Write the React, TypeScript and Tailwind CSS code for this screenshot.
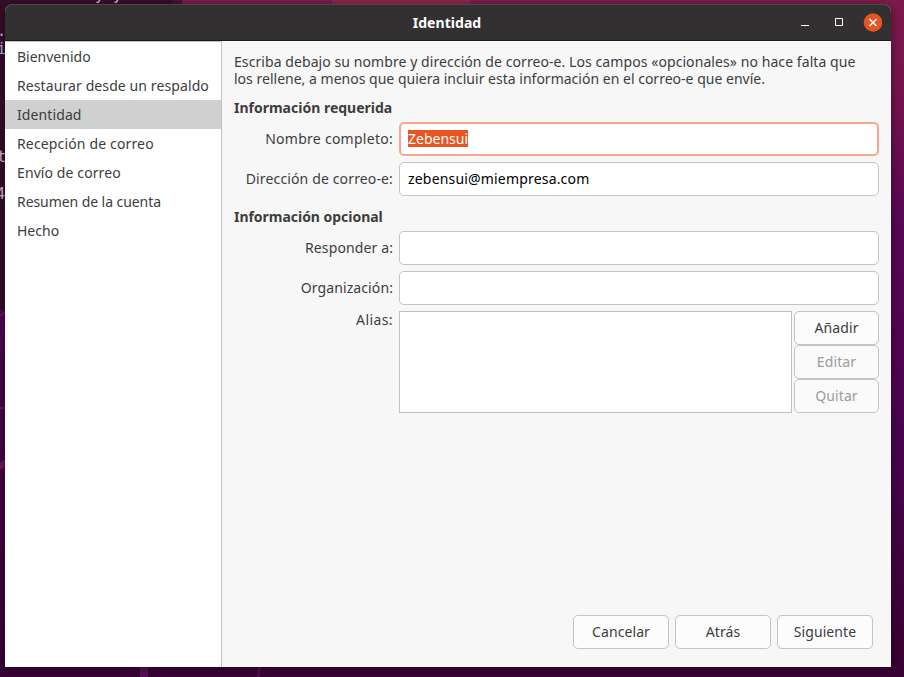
import React from "react";

const steps = [
  { label: "Bienvenido", track: "tracking-normal" },
  { label: "Restaurar desde un respaldo", track: "tracking-[0.1px]" },
  { label: "Identidad", track: "tracking-[0.1px]", active: true },
  { label: "Recepción de correo", track: "tracking-[0.15px]" },
  { label: "Envío de correo", track: "tracking-[0.1px]" },
  { label: "Resumen de la cuenta", track: "tracking-[-0.07px]" },
  { label: "Hecho", track: "tracking-normal" },
];

function Desktop() {
  return (
    <svg className="absolute inset-0" width="904" height="677" viewBox="0 0 904 677" aria-hidden="true">
      <defs>
        <linearGradient id="right" x1="0" y1="0" x2="0" y2="1">
          <stop offset="0" stopColor="#7d1a4b" />
          <stop offset="0.15" stopColor="#75134e" />
          <stop offset="0.32" stopColor="#590854" />
          <stop offset="0.65" stopColor="#4a0450" />
          <stop offset="1" stopColor="#38032f" />
        </linearGradient>
        <linearGradient id="left" x1="0" y1="0" x2="0" y2="1">
          <stop offset="0" stopColor="#4e0650" />
          <stop offset="1" stopColor="#3a0336" />
        </linearGradient>
      </defs>
      <rect width="904" height="677" fill="url(#right)" />
      <rect y="311" width="300" height="366" fill="url(#left)" />
      <rect y="660" width="904" height="17" fill="#3a0336" />
      <rect width="172" height="310" fill="#360c29" />
      <rect x="172" width="10" height="10" fill="#43152f" />
      <rect x="332" width="139" height="5" fill="#8b264d" />
      <path d="M0 314l5-3v2l-5 4zM0 407h5v2H0zM0 462l5-2v7l-5 3z" fill="#701553" />
      <path d="M140 660h8v17h-8zM259 666l2 0-2 11h-2z" fill="#5c1057" />
    </svg>
  );
}

function TerminalBits() {
  return (
    <div className="absolute inset-0 overflow-hidden font-['DejaVu_Sans_Mono',monospace] text-[15px] leading-4 text-[#c9c0c7]" aria-hidden="true">
      <span className="absolute left-[95px] top-[-13px]">y</span>
      <span className="absolute left-[113px] top-[-13px]">y</span>
      <span className="absolute left-[-3px] top-[23px]">.</span>
      <span className="absolute left-[-3px] top-[41px] text-[#a9b8dc]">i</span>
      <span className="absolute left-[-3px] top-[149px]">t</span>
      <span className="absolute left-[-4px] top-[186px]">4</span>
    </div>
  );
}

function Button({ children, className = "", disabled = false }: { children: React.ReactNode; className?: string; disabled?: boolean }) {
  return (
    <button
      disabled={disabled}
      className={`flex h-[34px] items-center justify-center rounded-[5px] border border-[#c4c4c4] pb-0.5 tracking-[0.1px] ${disabled ? "bg-[#fafafa] text-[#9c9c9c]" : "bg-[#fcfcfc] text-[#3d3d3d]"} ${className}`}
    >
      {children}
    </button>
  );
}

function Field({ label, value, track = "", focused = false }: { label: string; value?: string; track?: string; focused?: boolean }) {
  return (
    <div className="flex h-[34px] items-center">
      <label className={`mr-1.5 w-[159px] whitespace-nowrap pb-0.5 text-right ${track}`}>{label}</label>
      <div className={`flex h-full flex-1 items-center rounded-[5px] bg-white pb-0.5 text-black ${focused ? "border-2 border-[#f5a78d] px-[7px]" : "border border-[#c4c4c4] px-2 tracking-[0.18px]"}`}>
        {value && <span className={focused ? "bg-[#e95420] leading-[17px] text-white" : ""}>{value}</span>}
      </div>
    </div>
  );
}

export default function App() {
  return (
    <div className="relative h-[677px] w-[904px] overflow-hidden bg-[#300a24] px-[5px] pt-1 font-['Noto_Sans',sans-serif] text-[14px] text-[#3d3d3d]">
      <Desktop />
      <TerminalBits />
      <div className="relative flex h-[663px] w-[886px] flex-col overflow-hidden rounded-t-lg bg-[#f7f7f7] shadow-[0_2px_8px_2px_rgba(0,0,0,0.3)]">
        <header className="flex h-[37px] shrink-0 items-center border-b border-[#1d1c1c] border-t border-t-[#494747] bg-[#323030] pr-[9px]">
          <h1 className="ml-[300px] w-[284px] text-center font-bold tracking-[0.05px] text-white">Identidad</h1>
          <div className="-mt-0.5 ml-auto flex items-center">
            <svg width="85" height="20" viewBox="0 0 85 20" fill="none">
              <path d="M4 13.5h8" stroke="white" />
              <path d="M38.5 6.5h7v7h-7z" stroke="white" />
              <circle cx="76" cy="10.5" r="9.3" fill="#e95420" />
              <path d="m72.5 7 7 7m0-7-7 7" stroke="white" strokeWidth="1.6" />
            </svg>
          </div>
        </header>
        <div className="flex min-h-0 flex-1">
          <nav className="w-[217px] shrink-0 border-r border-t border-[#c0c0c0] bg-white">
            {steps.map((s) => (
              <div key={s.label} className={`flex h-[29px] items-center whitespace-nowrap pl-3 ${s.active ? "bg-[#d0d0d0]" : ""}`}>
                <span className={s.track}>{s.label}</span>
              </div>
            ))}
          </nav>
          <main className="flex flex-1 flex-col px-3 pt-3">
            <p className="whitespace-nowrap leading-[17px]">
              <span className="block h-[17px] tracking-[0.077px]">Escriba debajo su nombre y dirección de correo-e. Los campos «opcionales» no hace falta que</span>
              <span className="block h-[17px] tracking-[0.01px]">los rellene, a menos que quiera incluir esta información en el correo-e que envíe.</span>
            </p>
            <h2 className="mt-3 h-[17px] font-bold leading-[17px]">Información requerida</h2>
            <div className="mt-1.5 flex flex-col gap-1.5">
              <Field label="Nombre completo:" value="Zebensui" track="tracking-[0.27px]" focused />
              <Field label="Dirección de correo-e:" value="zebensui@miempresa.com" track="tracking-[0.14px]" />
            </div>
            <h2 className="mt-3 h-[17px] font-bold leading-[17px] tracking-[-0.03px]">Información opcional</h2>
            <div className="mt-1.5 flex flex-col gap-1.5">
              <Field label="Responder a:" track="tracking-[0.12px]" />
              <Field label="Organización:" track="tracking-[0.1px]" />
              <div className="flex h-[102px]">
                <label className="mr-1.5 w-[159px] text-right leading-[17px] tracking-[0.4px]">Alias:</label>
                <div className="mr-0.5 w-[393px] border border-[#c0c0c0] bg-white" />
                <div className="flex-1">
                  <Button className="w-full">Añadir</Button>
                  <Button className="w-full" disabled>Editar</Button>
                  <Button className="w-full" disabled>Quitar</Button>
                </div>
              </div>
            </div>
            <footer className="mb-[18px] mr-1.5 mt-auto flex justify-end gap-1.5">
              <Button className="w-24">Cancelar</Button>
              <Button className="w-24">Atrás</Button>
              <Button className="w-24">Siguiente</Button>
            </footer>
          </main>
        </div>
      </div>
    </div>
  );
}
